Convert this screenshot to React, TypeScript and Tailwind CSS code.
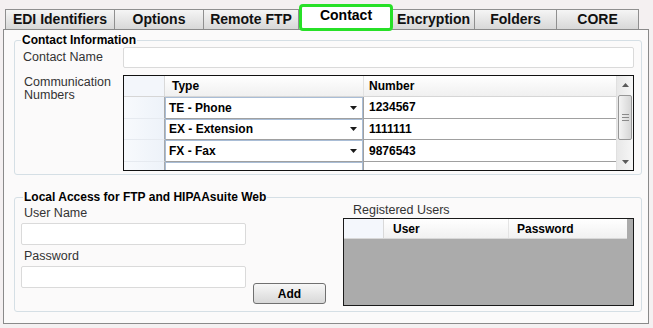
import React from 'react';

const tabs = [
  { label: 'EDI Identifiers', w: 'w-[110px] border-l' },
  { label: 'Options', w: 'w-[89px]' },
  { label: 'Remote FTP', w: 'w-[95px]' },
  { label: 'Contact', w: 'w-[94px]', active: true },
  { label: 'Encryption', w: 'w-[82px]' },
  { label: 'Folders', w: 'w-[82px]' },
  { label: 'CORE', w: 'w-[82px]' },
];

const numbers = [
  { type: 'TE - Phone', num: '1234567' },
  { type: 'EX - Extension', num: '1111111' },
  { type: 'FX - Fax', num: '9876543' },
];

const DropArrow = () => (
  <svg width="7" height="4" viewBox="0 0 7 4">
    <path d="M0 0h7L3.5 4z" fill="#1a1a1a" />
  </svg>
);

const ScrollArrow = ({ up }: { up?: boolean }) => (
  <svg width="7" height="4" viewBox="0 0 7 4">
    <path d={up ? 'M0 4h7L3.5 0z' : 'M0 0h7L3.5 4z'} fill="#5a5a5a" />
  </svg>
);

const Tab = ({ label, w, active }: { label: string; w: string; active?: boolean }) => {
  if (active) {
    return (
      <div
        className={`${w} h-[27px] -mb-[2px] relative z-10 flex items-center justify-center pb-[4px] bg-white border-[3px] border-[#27e027] rounded-[4px] text-[14px] font-bold text-black`}
      >
        {label}
      </div>
    );
  }
  return (
    <div
      className={`${w} h-[20px] flex items-center justify-center border-t border-r border-[#8f8f8f] bg-linear-to-b from-[#f5f5f5] to-[#d8d8d8] text-[14px] font-bold text-[#111]`}
    >
      {label}
    </div>
  );
};

const CommGrid = () => (
  <div className="w-[511px] h-[96px] border border-[#111] bg-white flex overflow-hidden">
    <div className="w-[492px] flex flex-col">
      {/* header */}
      <div className="h-[21px] flex border-b border-[#d6d6d6] bg-linear-to-b from-[#ffffff] to-[#f0f0f0] text-[12px] font-bold text-black">
        <div className="w-[41px] border-r border-[#d9d9d9] bg-[#f3f6fb]" />
        <div className="w-[198px] pl-[7px] flex items-center">Type</div>
        <div className="flex-1 pl-[5px] flex items-center border-l border-[#e2e2e2]">Number</div>
      </div>
      {numbers.map((r) => (
        <div key={r.num} className="h-[22px] flex text-[12px] font-bold text-black">
          <div className="w-[41px] border-r border-b border-r-[#a8a8a8] border-b-[#e6eaf0] bg-linear-to-r from-[#f8fafd] to-[#edf2f9]" />
          <div className="w-[198px] flex items-center justify-between pl-[3px] pr-[5px] bg-white border-t border-l border-r border-b border-[#a9bdd6] border-b-[#a0a0a0]">
            <span>{r.type}</span>
            <DropArrow />
          </div>
          <div className="flex-1 pl-[5px] flex items-center border-l border-b border-[#a0a0a0] bg-white">{r.num}</div>
        </div>
      ))}
      <div className="h-[8px] flex">
        <div className="w-[41px] border-r border-[#a8a8a8] bg-linear-to-r from-[#f8fafd] to-[#edf2f9]" />
        <div className="w-[198px] bg-white border-t border-l border-r border-[#a9bdd6]" />
        <div className="flex-1 border-l border-[#a0a0a0] bg-white" />
      </div>
    </div>
    {/* scrollbar */}
    <div className="w-[17px] flex flex-col bg-linear-to-r from-[#e8e8e8] to-[#f6f6f6] border-l border-[#e0e0e0]">
      <div className="h-[18px] flex items-center justify-center">
        <ScrollArrow up />
      </div>
      <div className="mx-[1px] mt-px h-[45px] rounded-[2px] border border-[#979797] bg-linear-to-r from-[#f4f4f4] to-[#d6d6d6] flex flex-col items-center justify-center gap-[2px]">
        <div className="w-[7px] h-px bg-[#8a8a8a]" />
        <div className="w-[7px] h-px bg-[#8a8a8a]" />
        <div className="w-[7px] h-px bg-[#8a8a8a]" />
      </div>
      <div className="flex-1" />
      <div className="h-[16px] flex items-center justify-center">
        <ScrollArrow />
      </div>
    </div>
  </div>
);

const UsersGrid = () => (
  <div className="w-[291px] h-[88px] border border-[#1a1a1a] bg-[#ababab]">
    <div className="w-[283px] h-[20px] flex border-b border-[#d8d8d8] bg-linear-to-b from-[#ffffff] to-[#f1f1f1] text-[12px] font-bold text-black">
      <div className="w-[40px] border-r border-[#d9d9d9] bg-[#f4f7fc]" />
      <div className="w-[125px] pl-[9px] flex items-center border-r border-[#e4e4e4]">User</div>
      <div className="flex-1 pl-[8px] flex items-center">Password</div>
    </div>
  </div>
);

export default function App() {
  return (
    <div className="w-[653px] h-[328px] bg-[#f4f0f1] font-['Liberation_Sans',Arial,sans-serif] overflow-hidden">
      <div className="h-[29px] ml-[5px] flex items-end">
        {tabs.map((t) => (
          <Tab key={t.label} label={t.label} w={t.w} active={t.active} />
        ))}
      </div>

      <div className="ml-[3px] w-[646px] h-[295px] border border-[#8a8a8a] bg-[#fbfafa] pt-[4px] pl-[10px] pr-[6px]">
        {/* Contact Information */}
        <fieldset className="w-[628px] border border-[#d5dfe5] rounded-[3px] pb-[3px]">
          <legend className="ml-[6px] px-[1px] text-[12px] leading-[13px] font-bold text-black">Contact Information</legend>
          <div className="flex items-center h-[21px]">
            <label className="w-[108px] pl-[8px] text-[12.5px] text-[#333]">Contact Name</label>
            <input type="text" className="w-[511px] h-[21px] bg-white border border-[#dadada] rounded-[2px] outline-none" />
          </div>
          <div className="flex mt-[7px]">
            <label className="w-[108px] pl-[9px] pt-[1px] text-[12.5px] leading-[13px] text-[#333]">
              Communication
              <br />
              Numbers
            </label>
            <CommGrid />
          </div>
        </fieldset>

        {/* Local Access */}
        <fieldset className="w-[628px] mt-[16px] border border-[#d5dfe5] rounded-[3px] pb-[5px]">
          <legend className="ml-[8px] px-[1px] text-[12px] leading-[13px] font-bold text-black">
            Local Access for FTP and HIPAAsuite Web
          </legend>
          <div className="flex pl-[6px] pr-[7px]">
            <div className="w-[225px] flex flex-col">
              <label className="mt-[2px] pl-[3px] text-[12.5px] leading-[14px] text-[#333]">User Name</label>
              <input type="text" className="mt-[3px] h-[22px] bg-white border border-[#dadada] rounded-[2px] outline-none" />
              <label className="mt-[4px] pl-[3px] text-[12.5px] leading-[14px] text-[#333]">Password</label>
              <input type="password" className="mt-[3px] h-[22px] bg-white border border-[#dadada] rounded-[2px] outline-none" />
            </div>
            <button
              type="button"
              className="self-end mb-[2px] ml-[7px] w-[73px] h-[21px] rounded-[3px] border border-[#707070] bg-linear-to-b from-[#f7f7f7] to-[#d8d8d8] text-[12px] font-bold text-black"
            >
              Add
            </button>
            <div className="ml-auto w-[291px] flex flex-col">
              <label className="pl-[10px] text-[12.5px] leading-[12px] text-[#333]">Registered Users</label>
              <div className="mt-[2px]">
                <UsersGrid />
              </div>
            </div>
          </div>
        </fieldset>
      </div>
    </div>
  );
}
